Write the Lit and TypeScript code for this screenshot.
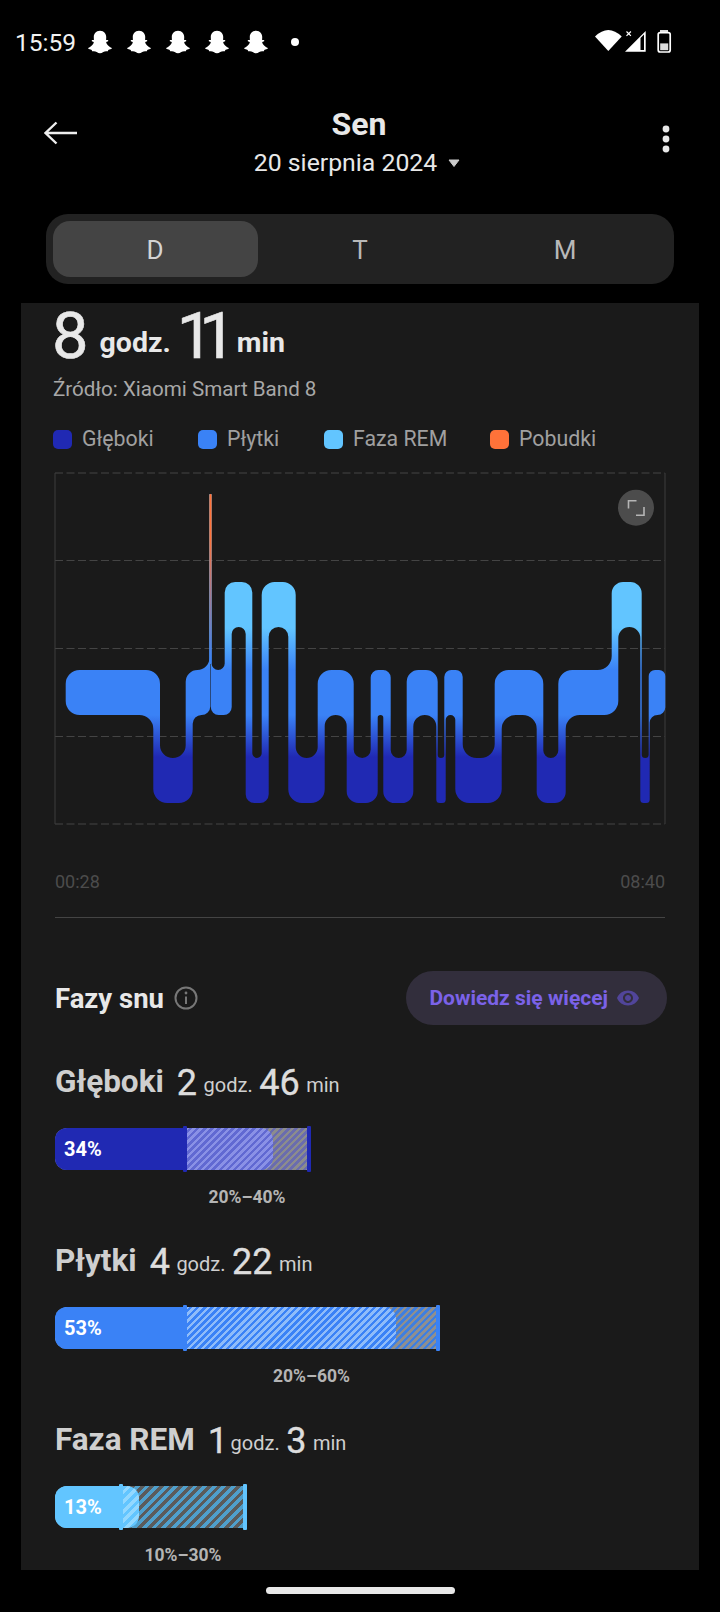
import { LitElement, html, css, svg } from 'lit';
import { customElement } from 'lit/decorators.js';

type Seg = [number, number, number];

const A = 494;
const R = 582;
const L = 670;
const D = 758;
const BAND = 45;

// Sleep stages as [x0, x1, band top], in page coordinates (the chart's viewBox uses the same).
const CHAIN_A: Seg[] = [
  [65.7, 160, L],
  [153.3, 192.7, D],
  [185.7, 210.3, L],
  [209.3, 210.3, A],
];
const CHAIN_B: Seg[] = [
  [210.8, 211.6, A],
  [210.8, 231.7, L],
  [224.7, 252.3, R],
  [245.7, 268.7, D],
  [261.7, 295.7, R],
  [288.3, 324.7, D],
  [317.7, 353.7, L],
  [346.7, 377.7, D],
  [370.7, 390.7, L],
  [383.3, 413.3, D],
  [406.7, 437.7, L],
  [436.3, 445.7, D],
  [444.3, 462.7, L],
  [455.3, 501.7, D],
  [494.7, 543.3, L],
  [536.7, 565.7, D],
  [558.3, 618.3, L],
  [611.7, 641.7, R],
  [640.3, 649.7, D],
  [648.7, 665.3, L],
];

const radius = (ext: number, bothConvex: boolean): number =>
  ext <= 0 ? 0 : Math.min(14, ext * (bothConvex ? 0.38 : 0.5));

const arc = (r: number, sweep: number, x: number, y: number): string =>
  `A${r} ${r} 0 0 ${sweep} ${x} ${y}`;

// Walks the top outline left to right, then the bottom outline back.
const outline = (segs: Seg[]): string => {
  let p = '';
  segs.forEach(([x0, x1, y], i) => {
    const prev = segs[i - 1];
    const next = segs[i + 1];
    const inC = !!prev && prev[2] < y;
    const outC = !!next && next[2] < y;
    const left = inC ? prev[1] : x0;
    const right = outC ? next[0] : x1;
    const r = radius(right - left, !inC && !outC);
    p += `${i === 0 ? 'M' : 'L'}${left} ${inC ? y - r : y + r}`;
    p += arc(r, inC ? 0 : 1, left + r, y);
    p += `L${right - r} ${y}`;
    p += arc(r, outC ? 0 : 1, right, outC ? y - r : y + r);
  });
  for (let i = segs.length - 1; i >= 0; i--) {
    const [x0, x1, y] = segs[i];
    const b = y + BAND;
    const prev = segs[i - 1];
    const next = segs[i + 1];
    const inC = !!next && next[2] > y;
    const outC = !!prev && prev[2] > y;
    const right = inC ? next[0] : x1;
    const left = outC ? prev[1] : x0;
    const r = radius(right - left, !inC && !outC);
    p += `L${right} ${inC ? b + r : b - r}`;
    p += arc(r, inC ? 0 : 1, right - r, b);
    p += `L${left + r} ${b}`;
    p += arc(r, outC ? 0 : 1, left, outC ? b + r : b - r);
  }
  return p + 'Z';
};

const GHOST =
  'M12 1.2C8.2 1.2 6.3 4 6.3 7L6.4 9.6C5.8 9.9 5 9.5 4.6 9.8C4.1 10.2 4.5 10.9 5.1 11.1L6.3 11.6C6.3 13 4.3 15.9 1.6 16.7C.9 17 1.1 17.7 1.8 18C2.8 18.4 4 18.5 4.4 18.8L4.8 20C6.4 19.8 7.6 19.7 9 20.6C10 21.3 11 21.8 12 21.8C13 21.8 14 21.3 15 20.6C16.4 19.7 17.6 19.8 19.2 20L19.6 18.8C20 18.5 21.2 18.4 22.2 18C22.9 17.7 23.1 17 22.4 16.7C19.7 15.9 17.7 13 17.7 11.6L18.9 11.1C19.5 10.9 19.9 10.2 19.4 9.8C19 9.5 18.2 9.9 17.6 9.6L17.7 7C17.7 4 15.8 1.2 12 1.2Z';

const EYE =
  'M12 4.5C7 4.5 2.73 7.61 1 12c1.73 4.39 6 7.5 11 7.5s9.27-3.11 11-7.5c-1.73-4.39-6-7.5-11-7.5zM12 17c-2.76 0-5-2.24-5-5s2.24-5 5-5 5 2.24 5 5-2.24 5-5 5zm0-8c-1.66 0-3 1.34-3 3s1.34 3 3 3 3-1.34 3-3-1.34-3-3-3z';

const PHASES = [
  { cls: 'deep', name: 'Głęboki', h: '2', m: '46', pct: 34, range: '20%–40%', lo: 185, hi: 309, end: 273 },
  { cls: 'light', name: 'Płytki', h: '4', m: '22', pct: 53, range: '20%–60%', lo: 185, hi: 438, end: 396 },
  { cls: 'rem', name: 'Faza REM', h: '1', m: '3', pct: 13, range: '10%–30%', lo: 121, hi: 245, end: 139 },
];

const LEGEND = [
  { name: 'Głęboki', color: '#2029b3', w: 145 },
  { name: 'Płytki', color: '#3a82f6', w: 126 },
  { name: 'Faza REM', color: '#62c5ff', w: 166 },
  { name: 'Pobudki', color: '#ff7239', w: 110 },
];

const BAR_LEFT = 54;

@customElement('app-root')
export class AppRoot extends LitElement {
  static styles = css`
    :host {
      display: block;
      width: 720px;
      height: 1612px;
      background: #000;
      font-family: Roboto, 'Liberation Sans', sans-serif;
      overflow: hidden;
    }

    .status {
      display: flex;
      align-items: center;
      height: 84px;
      padding: 0 48px 0 15px;
      color: #f2f2f2;
      font-size: 24.5px;
    }
    .status__time {
      margin-right: 12px;
    }
    .status__ghosts {
      display: flex;
      gap: 15px;
    }
    .status__dot {
      width: 8px;
      height: 8px;
      margin-left: 23px;
      border-radius: 50%;
      background: #fff;
    }
    .status__right {
      margin-left: auto;
    }
    svg {
      display: block;
    }

    .header {
      display: grid;
      grid-template-columns: 1fr auto 1fr;
      height: 130px;
      padding: 0 50px 0 44px;
      color: #e8e8e8;
    }
    .header__back {
      margin-top: 37px;
    }
    .header__center {
      display: flex;
      flex-direction: column;
      align-items: center;
    }
    .header__title {
      margin-top: 21px;
      margin-left: 4px;
      font-size: 32px;
      font-weight: 700;
      line-height: 38px;
    }
    .header__date {
      display: flex;
      align-items: center;
      gap: 11px;
      font-size: 24.8px;
      line-height: 40px;
    }
    .header__more {
      justify-self: end;
      margin-top: 41px;
    }

    .tabs {
      display: grid;
      grid-template-columns: repeat(3, 1fr);
      height: 70px;
      margin: 0 46px;
      padding: 7px 6.5px;
      box-sizing: border-box;
      border-radius: 22px;
      background: #222;
      color: #b8b8b8;
      font-size: 26px;
    }
    .tabs__item {
      display: flex;
      align-items: center;
      justify-content: center;
      padding-top: 1px;
      border-radius: 17px;
    }
    .tabs__item--active {
      background: #444;
      color: #d4d4d4;
    }

    .card {
      height: 1267px;
      margin: 19px 21px 0;
      padding: 1px 33px 0;
      box-sizing: border-box;
      background: #1a1a1a;
    }
    .total {
      height: 64px;
      margin-left: -2px;
      color: #e8e8e8;
      font-size: 65px;
      line-height: 64px;
      white-space: nowrap;
      -webkit-text-stroke: 0.6px #e8e8e8;
    }
    .total__unit {
      margin: 0 6px 0 11px;
      font-size: 28.5px;
      font-weight: 700;
      vertical-align: 6px;
      -webkit-text-stroke: 0;
    }
    .total__tight {
      letter-spacing: -14px;
      margin-right: 4px;
    }
    .source {
      margin-top: 8px;
      margin-left: -1px;
      color: #a8a8a8;
      font-size: 20.6px;
      line-height: 26px;
    }
    .legend {
      display: flex;
      height: 26px;
      margin-top: 24px;
      margin-left: -1px;
      color: #a0a0a0;
      font-size: 21.3px;
      line-height: 26px;
    }
    .legend__item {
      display: flex;
      align-items: center;
      gap: 10px;
    }
    .legend__dot {
      width: 19px;
      height: 19px;
      border-radius: 5px;
    }

    .chart {
      margin-top: 20px;
    }
    .times {
      display: flex;
      justify-content: space-between;
      margin-top: 45px;
      padding: 0 1px;
      color: #4c4c4c;
      font-size: 18px;
      line-height: 24px;
    }
    .divider {
      height: 1px;
      margin: 23px 1px 0;
      background: #444;
    }

    .phases-head {
      display: flex;
      align-items: center;
      justify-content: space-between;
      height: 54px;
      margin-top: 53px;
      padding-left: 1px;
      margin-right: -1px;
    }
    .phases-head__left {
      display: flex;
      align-items: center;
      gap: 10px;
      color: #e8e8e8;
      font-size: 27.5px;
      font-weight: 700;
    }
    .more {
      display: flex;
      align-items: center;
      gap: 8px;
      height: 54px;
      padding: 0 27px 0 23px;
      border-radius: 27px;
      background: #322e3c;
      color: #7b62e8;
      font-size: 21px;
      font-weight: 700;
    }

    .phases {
      margin-top: 35px;
    }
    .phase {
      height: 179px;
    }
    .phase__title {
      height: 44px;
      padding-left: 1px;
      color: #cfcfcf;
      font-size: 20px;
      line-height: 44px;
      white-space: nowrap;
    }
    .phase__name {
      margin-right: 13px;
      font-size: 31.5px;
      font-weight: 700;
    }
    .phase__num {
      color: #ddd;
      font-size: 36px;
      vertical-align: -3px;
      -webkit-text-stroke: 0.35px #ddd;
    }
    .phase__num--one {
      margin-right: -4px;
    }
    .phase__unit {
      margin: 0 6.5px;
    }

    .bar {
      position: relative;
      height: 42px;
      margin: 24px 0 0 1px;
    }
    .deep {
      --solid: #2029b3;
      --a: #6169d2;
      --b: #8a91e6;
      --c: #8c8c8c;
      --d: #6a6cae;
      --p: 2.5px;
    }
    .light {
      --solid: #3a82f6;
      --a: #3a82f6;
      --b: #8fbcf9;
      --c: #8f8f8f;
      --d: #3f7fe0;
      --p: 2.5px;
    }
    .rem {
      --solid: #62c5ff;
      --a: #62c5ff;
      --b: #93d8ff;
      --c: #5b5b5b;
      --d: #4f9fcc;
      --p: 3.4px;
    }
    .bar__zone,
    .bar__value,
    .bar__solid,
    .bar__tick {
      position: absolute;
      top: 0;
      bottom: 0;
    }
    .bar__zone {
      background: repeating-linear-gradient(
        135deg,
        var(--c) 0 var(--p),
        var(--d) var(--p) calc(var(--p) * 2)
      );
    }
    .bar__value {
      left: 0;
      border-radius: 12px;
      background: repeating-linear-gradient(
        135deg,
        var(--a) 0 var(--p),
        var(--b) var(--p) calc(var(--p) * 2)
      );
    }
    .bar__solid {
      left: 0;
      display: flex;
      align-items: center;
      padding-left: 9px;
      box-sizing: border-box;
      border-radius: 12px 0 0 12px;
      background: var(--solid);
      color: #fff;
      font-size: 20px;
      font-weight: 700;
    }
    .bar__tick {
      top: -2px;
      bottom: -2px;
      width: 4px;
      margin-left: -2px;
      border-radius: 1px;
      background: var(--solid);
    }
    .phase__range {
      margin-top: 16px;
      color: #b4b4b4;
      font-size: 17.5px;
      font-weight: 700;
      line-height: 22px;
    }
    .phase__range span {
      display: inline-block;
      transform: translateX(-50%);
    }

    .home {
      width: 189px;
      height: 7px;
      margin: 17px auto 0;
      border-radius: 4px;
      background: #e8e8e8;
    }
  `;

  private renderStatus() {
    return html`
      <div class="status">
        <span class="status__time">15:59</span>
        <div class="status__ghosts">
          ${[0, 1, 2, 3, 4].map(
            () => html`<svg width="24" height="24" viewBox="1 .5 22 22">
              <path d="${GHOST}" fill="#fff" />
            </svg>`
          )}
        </div>
        <div class="status__dot"></div>
        <svg class="status__right" width="77" height="28" viewBox="595 28 77 28">
          <path d="M595 36.5Q608.3 23.5 621.7 36.5L608.3 51Z" fill="#fff" />
          <path d="M626.5 31.5l4.4 4.4M630.9 31.5l-4.4 4.4" stroke="#fff" stroke-width="1.2" />
          <path
            d="M625 51.7L645.7 31V51.7ZM640.5 38V49.9H644V34.5Z"
            fill="#fff"
            fill-rule="evenodd"
          />
          <rect x="660" y="30" width="8" height="2.4" fill="#ddd" />
          <rect
            x="658.2"
            y="32.6"
            width="12"
            height="19.4"
            rx="2"
            fill="none"
            stroke="#fff"
            stroke-width="1.7"
          />
          <rect x="660.2" y="43.4" width="8" height="6.8" fill="#ddd" />
        </svg>
      </div>
    `;
  }

  private renderHeader() {
    return html`
      <div class="header">
        <svg class="header__back" width="34" height="24" viewBox="0 0 34 24">
          <path
            d="M33 12H2M12.5 1.5L1.5 12L12.5 22.5"
            fill="none"
            stroke="#eee"
            stroke-width="2.4"
          />
        </svg>
        <div class="header__center">
          <div class="header__title">Sen</div>
          <div class="header__date">
            20 sierpnia 2024
            <svg width="12" height="8" viewBox="0 0 12 8">
              <path d="M1 1H11L6 7.5Z" fill="#ccc" stroke="#ccc" stroke-linejoin="round" />
            </svg>
          </div>
        </div>
        <svg class="header__more" width="8" height="28" viewBox="0 0 8 28">
          <circle cx="4" cy="4" r="3.4" fill="#e8e8e8" />
          <circle cx="4" cy="14" r="3.4" fill="#e8e8e8" />
          <circle cx="4" cy="24" r="3.4" fill="#e8e8e8" />
        </svg>
      </div>
    `;
  }

  private renderChart() {
    return html`
      <svg class="chart" width="612" height="353" viewBox="54 472 612 353">
        <defs>
          <linearGradient id="stages" gradientUnits="userSpaceOnUse" x1="0" y1="494" x2="0" y2="803">
            ${[
              [582, '#62c5ff'],
              [628, '#62c5ff'],
              [670, '#3a82f6'],
              [715, '#3a82f6'],
              [757, '#2029b3'],
            ].map(
              ([y, c]) =>
                svg`<stop offset="${((y as number) - 494) / 309}" stop-color="${c}"></stop>`
            )}
          </linearGradient>
          <linearGradient id="awake" gradientUnits="userSpaceOnUse" x1="0" y1="494" x2="0" y2="660">
            <stop offset="0" stop-color="#ff7239"></stop>
            <stop offset="0.27" stop-color="#ff7239"></stop>
            <stop offset="1" stop-color="#3a82f6"></stop>
          </linearGradient>
        </defs>
        <g stroke="#444" fill="none">
          <path d="M55 473H665M55 560.5H665M55 648.5H665M55 736.5H665M55 824H665" stroke-dasharray="8 3.5" />
          <path d="M55 473V824M665 473V824" stroke="#3c3c3c" />
        </g>
        <path d="${outline(CHAIN_A)}" fill="url(#stages)" />
        <path d="${outline(CHAIN_B)}" fill="url(#stages)" />
        <rect x="209.4" y="494" width="2.2" height="170" rx="1" fill="url(#awake)" />
        <circle cx="636" cy="507.7" r="18" fill="#4c4c4c" />
        <path
          d="M628.5 508.5V500.8H636.5M644 507V515.2H636"
          fill="none"
          stroke="#b5b5b5"
          stroke-width="1.6"
        />
      </svg>
    `;
  }

  private renderPhase(p: (typeof PHASES)[number]) {
    const lo = p.lo - BAR_LEFT - 1;
    const hi = p.hi - BAR_LEFT - 1;
    const end = p.end - BAR_LEFT - 1;
    return html`
      <div class="phase ${p.cls}">
        <div class="phase__title">
          <span class="phase__name">${p.name}</span
          ><span class="phase__num ${p.h === '1' ? 'phase__num--one' : ''}">${p.h}</span
          ><span class="phase__unit">godz.</span><span class="phase__num">${p.m}</span
          ><span class="phase__unit">min</span>
        </div>
        <div class="bar">
          <div class="bar__zone" style="left:${lo}px;width:${hi - lo}px"></div>
          <div class="bar__value" style="width:${end}px"></div>
          <div class="bar__solid" style="width:${lo}px">${p.pct}%</div>
          <div class="bar__tick" style="left:${lo}px"></div>
          <div class="bar__tick" style="left:${hi}px"></div>
        </div>
        <div class="phase__range" style="margin-left:${(lo + hi) / 2 + 1}px">
          <span>${p.range}</span>
        </div>
      </div>
    `;
  }

  render() {
    return html`
      ${this.renderStatus()} ${this.renderHeader()}
      <div class="tabs">
        <div class="tabs__item tabs__item--active">D</div>
        <div class="tabs__item">T</div>
        <div class="tabs__item">M</div>
      </div>
      <div class="card">
        <div class="total">
          <span>8</span><span class="total__unit">godz.</span><span class="total__tight">11</span
          ><span class="total__unit">min</span>
        </div>
        <div class="source">Źródło: Xiaomi Smart Band 8</div>
        <div class="legend">
          ${LEGEND.map(
            (l) => html`<div class="legend__item" style="width:${l.w}px">
              <div class="legend__dot" style="background:${l.color}"></div>
              ${l.name}
            </div>`
          )}
        </div>
        ${this.renderChart()}
        <div class="times"><span>00:28</span><span>08:40</span></div>
        <div class="divider"></div>
        <div class="phases-head">
          <div class="phases-head__left">
            Fazy snu
            <svg width="24" height="24" viewBox="0 0 24 24">
              <circle cx="12" cy="12" r="10.5" fill="none" stroke="#777" stroke-width="2" />
              <path d="M12 10.5V18" stroke="#777" stroke-width="2" />
              <circle cx="12" cy="7" r="1.4" fill="#777" />
            </svg>
          </div>
          <div class="more">
            Dowiedz się więcej
            <svg width="24" height="24" viewBox="0 0 24 24"><path d="${EYE}" fill="#51459a" /></svg>
          </div>
        </div>
        <div class="phases">${PHASES.map((p) => this.renderPhase(p))}</div>
      </div>
      <div class="home"></div>
    `;
  }
}
